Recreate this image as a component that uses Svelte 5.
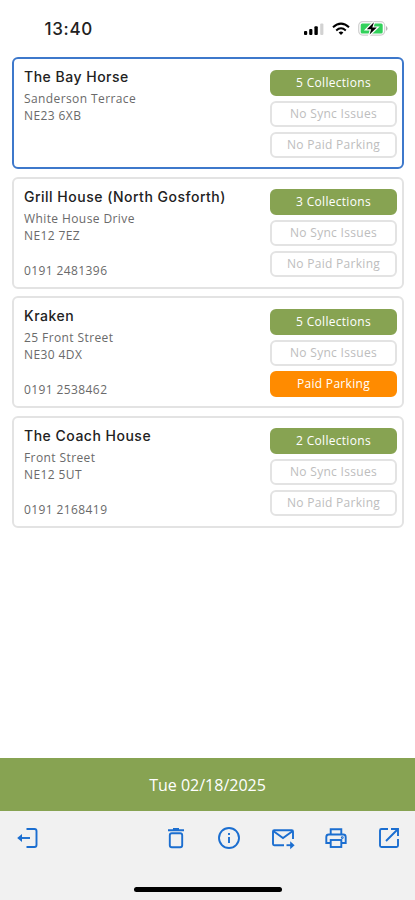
<script>
    let selected = 0;
    let dateLabel = "Tue 02/18/2025";

    let venues = [
        { name: "The Bay Horse", street: "Sanderson Terrace", postcode: "NE23 6XB", phone: "", collections: 5, paidParking: false },
        { name: "Grill House (North Gosforth)", street: "White House Drive", postcode: "NE12 7EZ", phone: "0191 2481396", collections: 3, paidParking: false },
        { name: "Kraken", street: "25 Front Street", postcode: "NE30 4DX", phone: "0191 2538462", collections: 5, paidParking: true },
        { name: "The Coach House", street: "Front Street", postcode: "NE12 5UT", phone: "0191 2168419", collections: 2, paidParking: false },
    ];

    function selectVenue(i) {
        selected = i;
    }
</script>

<div class="screen">
    <header class="statusBar">
        <span class="clock">13:40</span>
        <div class="indicators">
            <svg width="20" height="14" viewBox="0 0 20 14">
                <rect x="0" y="9" width="3.2" height="4" rx="1" />
                <rect x="5.2" y="7" width="3.2" height="6" rx="1" />
                <rect x="10.4" y="4.3" width="3.4" height="8.7" rx="1" />
                <rect x="16.2" y="1.5" width="3.2" height="11.5" rx="1" fill="#d2d2d2" />
            </svg>
            <svg width="18" height="14" viewBox="0 0 18 14" fill="none" stroke="#000" stroke-width="2">
                <path d="M1 5.2Q9-2 17 5.2" />
                <path d="M4.2 8.4Q9 4.2 13.8 8.4" />
                <path d="M6.6 10.5Q9 8.7 11.4 10.5L9 13Z" fill="#000" stroke="none" />
            </svg>
            <svg width="30" height="15" viewBox="0 0 30 15">
                <rect x="0.7" y="0.7" width="26" height="13.4" rx="4" fill="#fff" stroke="#d0d0d0" stroke-width="1.2" />
                <rect x="2.7" y="2.4" width="22" height="10" rx="1.5" fill="#32d15b" />
                <path d="M28 5v4.8q1.5-.8 1.5-2.4T28 5z" fill="#b5b5b5" />
                <path d="M15.9 1.2L8.8 8.2h4.4l-1.6 5.4 7.2-7h-4.5z" stroke="#fff" stroke-width="2.4" paint-order="stroke" />
            </svg>
        </div>
    </header>

    <main class="venueList">
        {#each venues as venue, i}
        <button class="card" class:selected={selected === i} on:click={() => selectVenue(i)}>
            <div class="details">
                <h4>{venue.name}</h4>
                <p>{venue.street}</p>
                <p>{venue.postcode}</p>
                <p class="phone">{venue.phone}</p>
            </div>
            <div class="badges">
                <span class="badge green">{venue.collections} Collections</span>
                <span class="badge">No Sync Issues</span>
                <span class="badge" class:orange={venue.paidParking}>{venue.paidParking ? "Paid Parking" : "No Paid Parking"}</span>
            </div>
        </button>
        {/each}
    </main>

    <div class="dateBar"><span>{dateLabel}</span></div>

    <footer>
        <nav class="toolbar">
            <button class="exit" aria-label="Exit">
                <svg viewBox="0 0 24 24">
                    <path d="M10.5 3H18.5Q20.5 3 20.5 5V19Q20.5 21 18.5 21H10.5" />
                    <path d="M3 12H14" />
                    <path d="M1.2 12L6 8v8z" fill="#1b6ed0" stroke="none" />
                </svg>
            </button>
            <button aria-label="Delete">
                <svg viewBox="0 0 24 24">
                    <path d="M4 4.2H20M9 3H15" />
                    <rect x="5.8" y="7.2" width="12.4" height="14" rx="2" />
                </svg>
            </button>
            <button aria-label="Information">
                <svg viewBox="0 0 24 24">
                    <circle cx="12" cy="12" r="10" />
                    <path d="M12 11V17M12 7V9" />
                </svg>
            </button>
            <button aria-label="Send mail">
                <svg viewBox="0 0 24 24">
                    <path d="M13 19.2H3.2Q2 19.2 2 18V5.6Q2 4.2 3.2 4.2H20.8Q22 4.2 22 5.6V13" />
                    <path d="M2.6 5.2L12 12L21.4 5.2" />
                    <path d="M15.5 19.2H21" />
                    <path d="M19.2 15.2L23.6 19.2L19.2 23.2z" fill="#1b6ed0" stroke="none" />
                </svg>
            </button>
            <button aria-label="Print">
                <svg viewBox="0 0 24 24">
                    <path d="M6.7 8.3V3.2H17.3V8.3" />
                    <path d="M6.5 17H2.3V11Q2.3 8.5 4.8 8.5H19.2Q21.7 8.5 21.7 11V17H17.5" />
                    <rect x="6.7" y="14" width="10.6" height="7" />
                    <circle cx="18.3" cy="11.6" r="0.5" />
                </svg>
            </button>
            <button aria-label="Open">
                <svg viewBox="0 0 24 24">
                    <path d="M11 3H4.5Q3 3 3 4.5V19.5Q3 21 4.5 21H19.5Q21 21 21 19.5V13" />
                    <path d="M9 15L20.5 3.5M14 3H21V10" />
                </svg>
            </button>
        </nav>
        <div class="homeIndicator"></div>
    </footer>
</div>

<style>
    .screen {
        display: flex;
        flex-direction: column;
        width: 415px;
        height: 900px;
        background-color: white;
        font-family: "Open Sans", sans-serif;
        overflow: hidden;
    }

    button {
        margin: 0;
        padding: 0;
        border: none;
        background: none;
        font-family: inherit;
        cursor: pointer;
    }

    .statusBar {
        display: flex;
        justify-content: space-between;
        align-items: center;
        box-sizing: border-box;
        height: 57px;
        padding: 0 27px 0 44.5px;
    }

    .clock {
        font-family: Inter, sans-serif;
        font-size: 17px;
        font-weight: 500;
        letter-spacing: 0.7px;
        color: #222;
    }

    .indicators {
        display: flex;
        align-items: center;
        gap: 8px;
    }

    .venueList {
        display: flex;
        flex-direction: column;
        flex: 1;
        gap: 7.5px;
        padding: 0.4px 11px 0 11.5px;
    }

    .card {
        display: flex;
        justify-content: space-between;
        align-items: flex-start;
        box-sizing: border-box;
        height: 112px;
        padding: 8.7px 5px 0 10.5px;
        border: 2px solid #e3e3e3;
        border-radius: 6px;
        text-align: left;
    }

    .selected {
        border-color: #3d78cb;
    }

    h4 {
        margin: 0 0 4px;
        font-family: Inter, sans-serif;
        font-size: 14px;
        font-weight: 500;
        line-height: 18px;
        letter-spacing: 0.5px;
        color: #222;
    }

    p {
        margin: 0;
        font-size: 12px;
        line-height: 17.4px;
        letter-spacing: 0.4px;
        color: #6a6a6a;
    }

    .phone {
        margin-top: 17.4px;
    }

    .badges {
        display: flex;
        flex-direction: column;
        gap: 5px;
        width: 127px;
        padding-top: 1.6px;
    }

    .badge {
        box-sizing: border-box;
        height: 26px;
        border: 2px solid #e3e3e3;
        border-radius: 6px;
        font-size: 12px;
        line-height: 22px;
        letter-spacing: 0.3px;
        text-align: center;
        color: #bdbdbd;
    }

    .green {
        border-color: #87a352;
        background-color: #87a352;
        color: white;
    }

    .orange {
        border-color: #ff8b00;
        background-color: #ff8b00;
        color: white;
    }

    .dateBar {
        display: flex;
        justify-content: center;
        align-items: center;
        height: 53px;
        background-color: #87a352;
        font-size: 16px;
        color: white;
    }

    footer {
        display: flex;
        flex-direction: column;
        justify-content: space-between;
        align-items: center;
        box-sizing: border-box;
        height: 89px;
        padding: 14px 0 8px;
        background-color: #f1f1f1;
    }

    .toolbar {
        display: flex;
        box-sizing: border-box;
        width: 100%;
        gap: 29.2px;
        padding: 0 14px 0 16px;
    }

    .toolbar button {
        width: 24px;
        height: 26px;
    }

    .toolbar .exit {
        margin-right: auto;
    }

    .toolbar svg {
        display: block;
        width: 24px;
        height: 26px;
        fill: none;
        stroke: #1b6ed0;
        stroke-width: 1.9;
    }

    .homeIndicator {
        width: 148px;
        height: 5px;
        border-radius: 3px;
        background-color: black;
    }
</style>
